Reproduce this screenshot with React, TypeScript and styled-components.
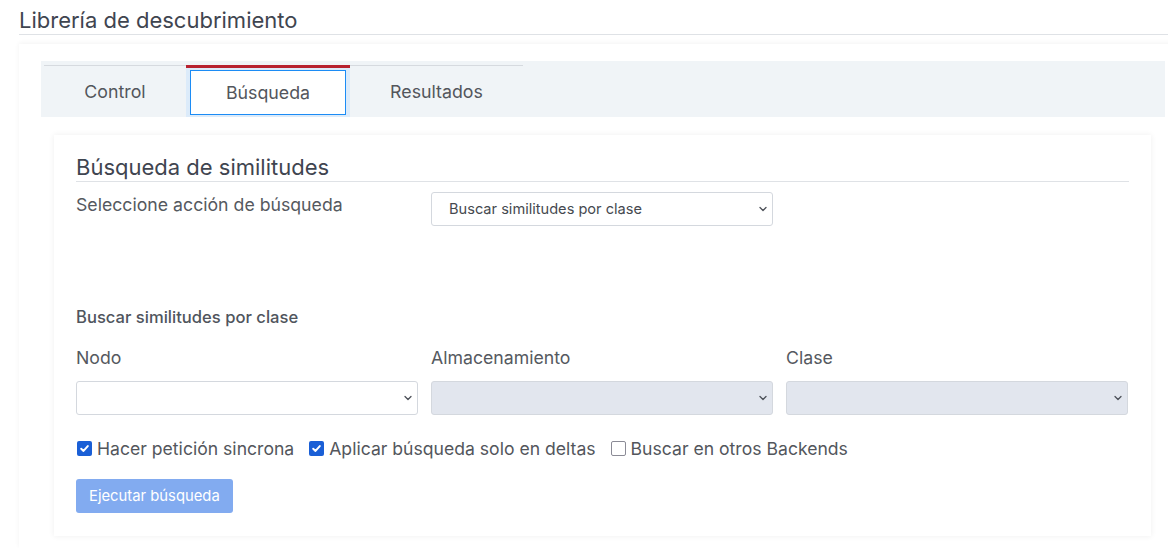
import React from "react";
import styled, { createGlobalStyle } from "styled-components";

const Global = createGlobalStyle`
  html, body { margin: 0; padding: 0; background: #fff; overflow: hidden; }
  body { font-family: Inter, "Noto Sans", sans-serif; color: #4a4f57; }
  * { box-sizing: border-box; }
`;

const Page = styled.div`
  padding: 7px 0 0 19px;
  width: 1168px;
`;

const PageTitle = styled.h1`
  margin: 0;
  font-size: 22px;
  font-weight: 400;
  line-height: 26px;
  color: #3f4550;
  padding-bottom: 1px;
  border-bottom: 1px solid #dfe2e6;
`;

const OuterCard = styled.div`
  margin-top: 9px;
  width: 1170px;
  background: #fff;
  box-shadow: 0 -1px 5px rgba(0, 0, 0, 0.05);
  padding: 17px 0 12px 22px;
`;

const TabBar = styled.div`
  width: 1124px;
  height: 56px;
  background: #f0f4f7;
  padding: 4px 0 0 3px;
  display: flex;
`;

const Tab = styled.div<{ $w: number; $active?: boolean }>`
  width: ${(p) => p.$w}px;
  height: 52px;
  display: flex;
  align-items: center;
  justify-content: center;
  font-size: 17.8px;
  color: #53565c;
  border-top: ${(p) => (p.$active ? "3px solid #b8222f" : "1px solid #d6dadf")};
  background: ${(p) => (p.$active ? "#dcebfa" : "transparent")};
  padding: ${(p) => (p.$active ? "2px 4px 2px 4px" : "0 0 1px 0")};
`;

const TabFocus = styled.span`
  flex: 1;
  align-self: stretch;
  display: flex;
  align-items: center;
  justify-content: center;
  background: #fff;
  border: 1.5px solid #1c8cf5;
`;

const InnerCard = styled.div`
  margin: 18px 0 0 13px;
  width: 1097px;
  background: #fff;
  box-shadow: 0 0 6px rgba(0, 0, 0, 0.07);
  padding: 19px 22px 23px 22px;
`;

const SectionTitle = styled.h2`
  margin: 0;
  font-size: 22px;
  font-weight: 400;
  line-height: 27px;
  color: #3f4550;
  border-bottom: 1px solid #dfe2e6;
`;

const Grid = styled.div<{ $mt: number; $top?: boolean }>`
  display: grid;
  grid-template-columns: repeat(3, 342px);
  column-gap: 13px;
  margin-top: ${(p) => p.$mt}px;
  align-items: ${(p) => (p.$top ? "start" : "center")};
`;

const Label = styled.div<{ $lh?: number }>`
  font-size: 17.7px;
  line-height: ${(p) => p.$lh ?? 22}px;
  color: #555960;
`;

const SubTitle = styled.div`
  margin-top: 80px;
  font-size: 16.6px;
  font-weight: 500;
  line-height: 22px;
  color: #50555d;
`;

const SelectBox = styled.div<{ $disabled?: boolean }>`
  height: 34px;
  border: 1px solid #d4d8de;
  border-radius: 3px;
  background: ${(p) => (p.$disabled ? "#e2e6ee" : "#fff")};
  display: flex;
  align-items: center;
  justify-content: space-between;
  padding: 0 3px 0 17px;
  font-size: 14.6px;
  color: #45494f;
`;

const Chevron = () => (
  <svg width="12" height="12" viewBox="0 0 12 12" fill="none">
    <path d="M3 4.5 L6 7.5 L9 4.5" stroke="#4c5058" strokeWidth="1.3" strokeLinecap="round" strokeLinejoin="round" />
  </svg>
);

const Select = ({ value, disabled }: { value?: string; disabled?: boolean }) => (
  <SelectBox $disabled={disabled}>
    <span>{value}</span>
    <Chevron />
  </SelectBox>
);

const CheckRow = styled.div`
  margin-top: 22px;
  display: flex;
  align-items: center;
  gap: 14px;
  height: 22px;
`;

const CheckItem = styled.label`
  display: flex;
  align-items: center;
  gap: 5px;
  font-size: 17.6px;
  color: #53565c;
`;

const Box = styled.span<{ $checked?: boolean }>`
  width: 15px;
  height: 15px;
  border-radius: 2px;
  margin-left: 1px;
  display: flex;
  align-items: center;
  justify-content: center;
  background: ${(p) => (p.$checked ? "#1a5fd6" : "#fff")};
  border: ${(p) => (p.$checked ? "none" : "1.5px solid #8b8b96")};
`;

const Check = ({ checked, label }: { checked?: boolean; label: string }) => (
  <CheckItem>
    <Box $checked={checked}>
      {checked && (
        <svg width="11" height="11" viewBox="0 0 10 10">
          <path d="M2 5.2 L4.1 7.2 L8 2.8" stroke="#fff" strokeWidth="1.8" fill="none" strokeLinecap="round" strokeLinejoin="round" />
        </svg>
      )}
    </Box>
    {label}
  </CheckItem>
);

const Button = styled.button`
  margin-top: 20px;
  height: 34px;
  padding: 0 13px;
  border: none;
  border-radius: 3px;
  background: #82abf0;
  color: #fff;
  font-family: Inter, sans-serif;
  font-size: 14.8px;
  display: block;
`;

export default function App() {
  return (
    <>
      <Global />
      <Page>
        <PageTitle>Librería de descubrimiento</PageTitle>
        <OuterCard>
          <TabBar>
            <Tab $w={142}>Control</Tab>
            <Tab $w={164} $active>
              <TabFocus>Búsqueda</TabFocus>
            </Tab>
            <Tab $w={173}>Resultados</Tab>
          </TabBar>
          <InnerCard>
            <SectionTitle>Búsqueda de similitudes</SectionTitle>
            <Grid $mt={10} $top>
              <Label $lh={26}>Seleccione acción de búsqueda</Label>
              <Select value="Buscar similitudes por clase" />
            </Grid>
            <SubTitle>Buscar similitudes por clase</SubTitle>
            <Grid $mt={19}>
              <Label>Nodo</Label>
              <Label>Almacenamiento</Label>
              <Label>Clase</Label>
            </Grid>
            <Grid $mt={12}>
              <Select />
              <Select disabled />
              <Select disabled />
            </Grid>
            <CheckRow>
              <Check checked label="Hacer petición sincrona" />
              <Check checked label="Aplicar búsqueda solo en deltas" />
              <Check label="Buscar en otros Backends" />
            </CheckRow>
            <Button>Ejecutar búsqueda</Button>
          </InnerCard>
        </OuterCard>
      </Page>
    </>
  );
}
